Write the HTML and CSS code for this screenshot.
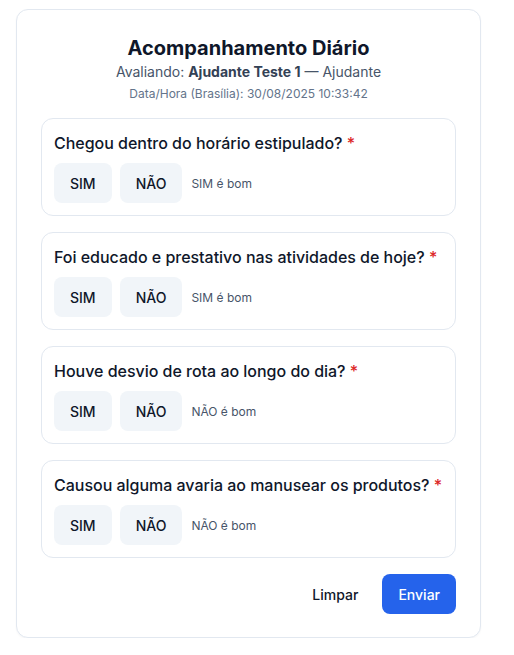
FILE: index.html
```html
<!DOCTYPE html>
<html lang="pt-BR">
<head>
<meta charset="utf-8">
<link rel="stylesheet" href="styles.css">
</head>
<body>
<div class="card">
  <header class="head">
    <h1 class="title">Acompanhamento Diário</h1>
    <p class="sub">Avaliando: <strong>Ajudante Teste 1</strong> — Ajudante</p>
    <p class="date">Data/Hora (Brasília): 30/08/2025 10:33:42</p>
  </header>
  <div class="questions">
    <div class="q">
      <div class="q-label">Chegou dentro do horário estipulado? <span class="req">*</span></div>
      <div class="opts"><button class="opt">SIM</button><button class="opt">NÃO</button><span class="hint">SIM é bom</span></div>
    </div>
    <div class="q">
      <div class="q-label">Foi educado e prestativo nas atividades de hoje? <span class="req">*</span></div>
      <div class="opts"><button class="opt">SIM</button><button class="opt">NÃO</button><span class="hint">SIM é bom</span></div>
    </div>
    <div class="q">
      <div class="q-label">Houve desvio de rota ao longo do dia? <span class="req">*</span></div>
      <div class="opts"><button class="opt">SIM</button><button class="opt">NÃO</button><span class="hint">NÃO é bom</span></div>
    </div>
    <div class="q">
      <div class="q-label">Causou alguma avaria ao manusear os produtos? <span class="req">*</span></div>
      <div class="opts"><button class="opt">SIM</button><button class="opt">NÃO</button><span class="hint">NÃO é bom</span></div>
    </div>
  </div>
  <div class="actions">
    <button class="btn ghost">Limpar</button>
    <button class="btn primary">Enviar</button>
  </div>
</div>
</body>
</html>
```
FILE: styles.css
```css
* { box-sizing: border-box; }
html, body { margin: 0; background: #fff; }
body {
  font-family: Inter, "Noto Sans", sans-serif;
  color: #0f172a;
  padding: 9px 0 0 16px;
}
.card {
  width: 465px;
  border: 1px solid #e2e8f0;
  border-radius: 12px;
  padding: 24px 24px 23px;
  background: #fff;
  box-shadow: 0 1px 2px rgba(15, 23, 42, 0.04);
}
.head { text-align: center; }
.title {
  margin: 0;
  font-size: 20px;
  line-height: 28px;
  font-weight: 700;
  color: #0f172a;
}
.sub {
  margin: 0;
  font-size: 14px;
  line-height: 20px;
  color: #475569;
}
.sub strong { color: #334155; font-weight: 700; }
.date {
  margin: 4px 0 0;
  font-size: 12px;
  line-height: 16px;
  color: #64748b;
}
.questions {
  margin-top: 16px;
  display: flex;
  flex-direction: column;
  gap: 16px;
}
.q {
  border: 1px solid #e2e8f0;
  border-radius: 12px;
  padding: 12px;
}
.q-label {
  font-size: 16px;
  line-height: 24px;
  font-weight: 500;
  color: #0f172a;
  letter-spacing: -0.02px;
}
.req { color: #dc2626; }
.opts {
  margin-top: 8px;
  display: flex;
  align-items: center;
  gap: 8px;
}
.opt {
  font-family: inherit;
  height: 40px;
  padding: 0 16px;
  border: 0;
  border-radius: 8px;
  background: #f1f5f9;
  color: #0f172a;
  font-size: 14px;
  font-weight: 500;
}
.hint {
  margin-left: 1px;
  font-size: 12px;
  color: #475569;
}
.actions {
  margin-top: 16px;
  display: flex;
  justify-content: flex-end;
  gap: 8px;
}
.btn {
  font-family: inherit;
  height: 40px;
  padding: 0 16px;
  border: 0;
  border-radius: 8px;
  font-size: 14px;
  font-weight: 500;
}
.ghost { background: transparent; color: #0f172a; }
.primary { background: #2563eb; color: #fff; }
```
